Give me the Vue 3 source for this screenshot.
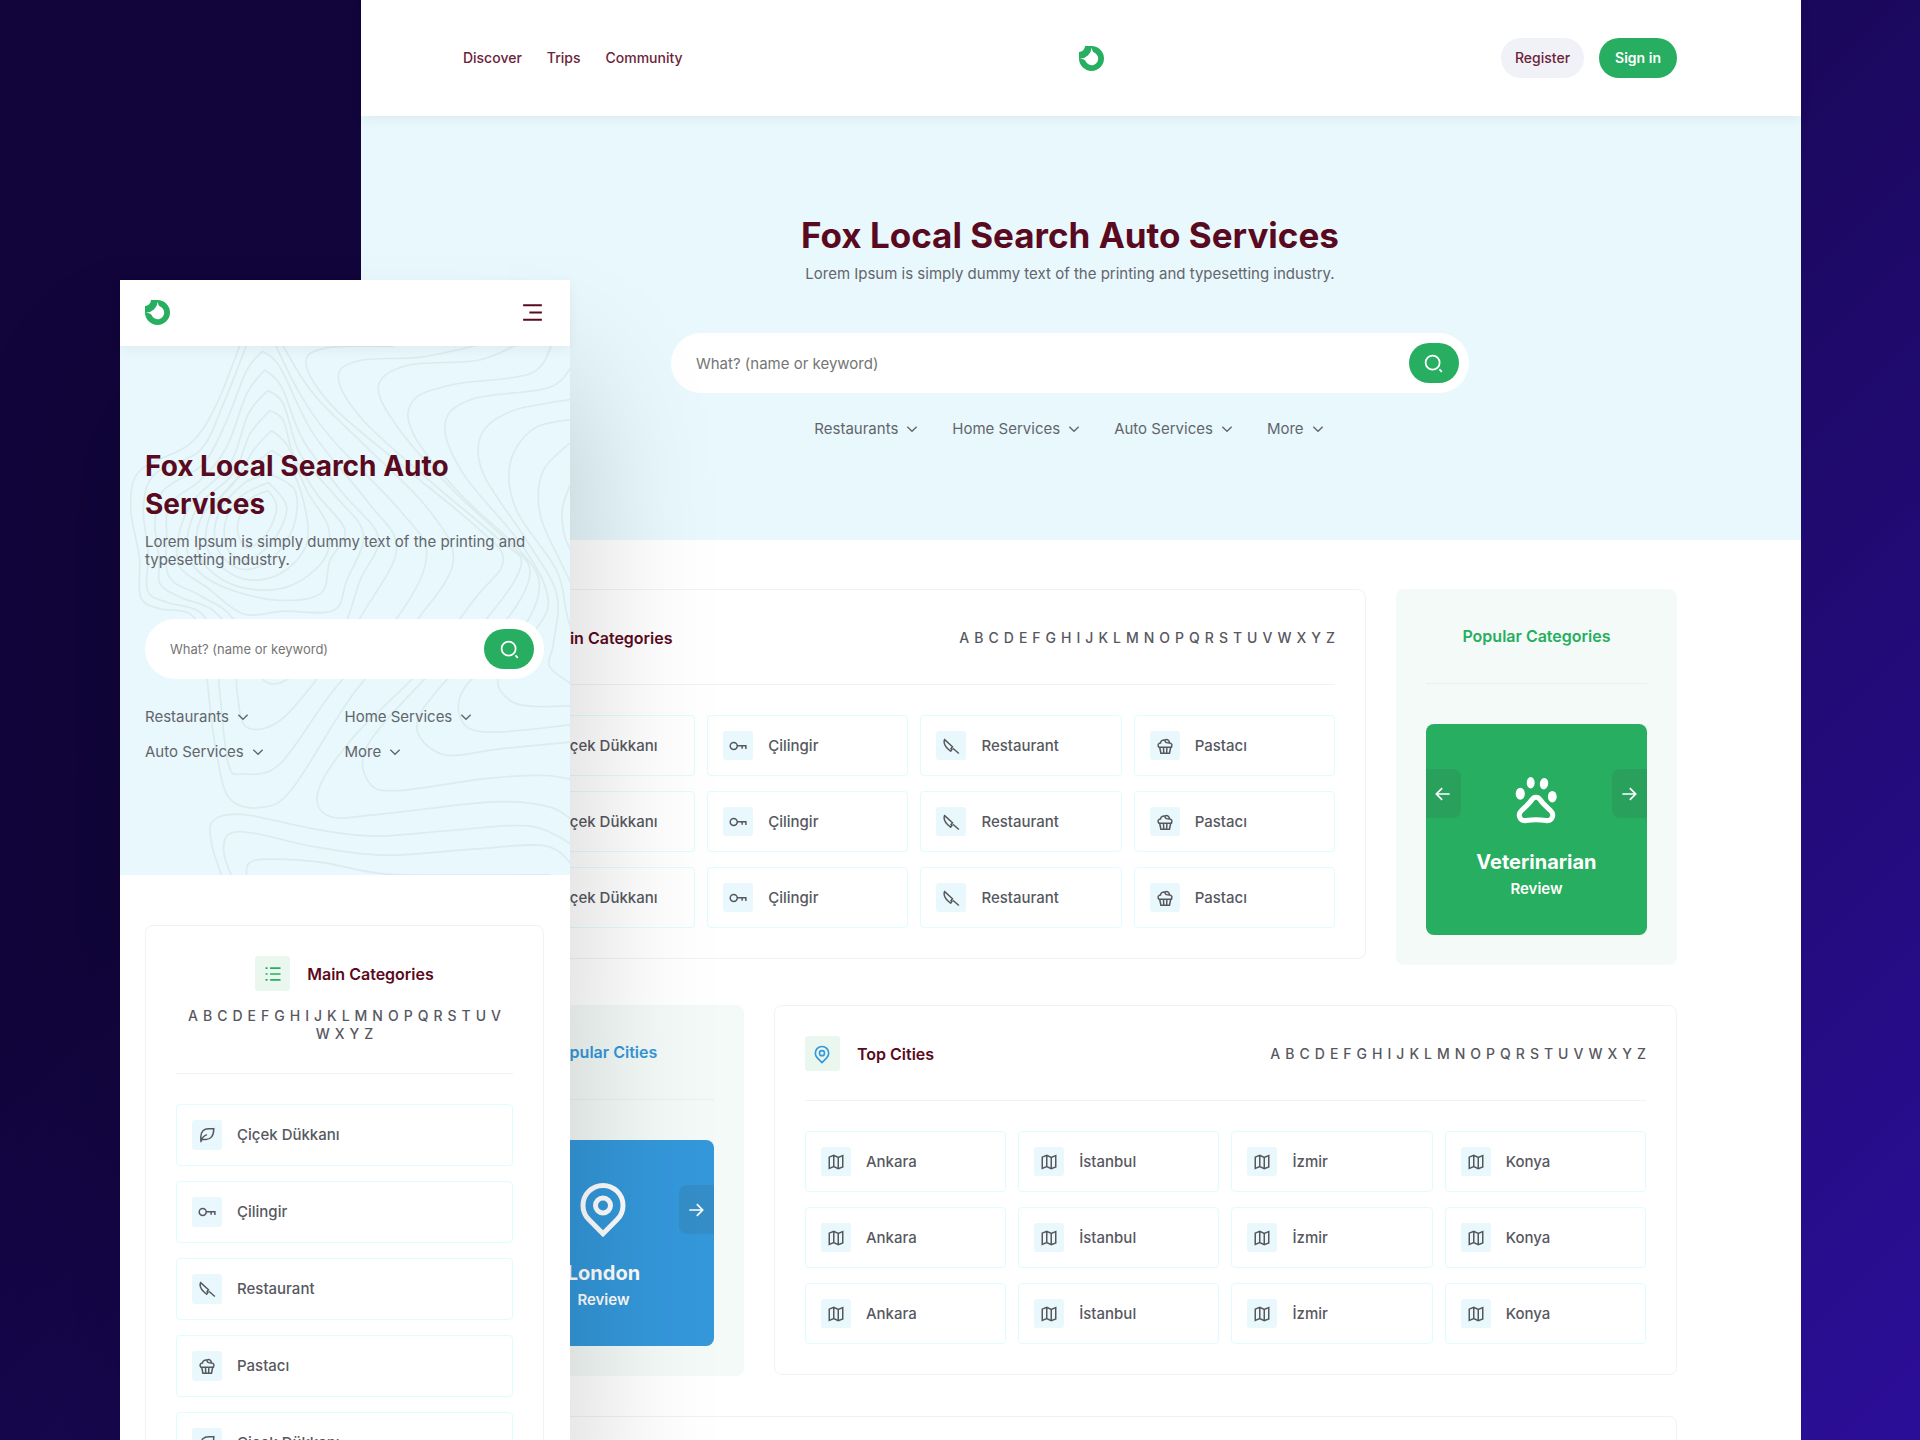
<script setup>
import { ref } from 'vue'

const alphabet = 'ABCDEFGHIJKLMNOPQRSTUVWXYZ'.split('')
const navLinks = ['Discover', 'Trips', 'Community']
const filters = ['Restaurants', 'Home Services', 'Auto Services', 'More']

const categories = [
  { label: 'Çiçek Dükkanı', icon: 'leaf' },
  { label: 'Çilingir', icon: 'key' },
  { label: 'Restaurant', icon: 'knife' },
  { label: 'Pastacı', icon: 'cake' }
]
const cities = ['Ankara', 'İstanbul', 'İzmir', 'Konya'].map((label) => ({ label, icon: 'map' }))

// three identical rows in the wide lists, a longer single column on the phone
const categoryRows = [...categories, ...categories, ...categories]
const cityRows = [...cities, ...cities, ...cities]

const keyword = ref('')

// 24x24 stroke icons
const icons = {
  leaf: 'M4 21.500c0-2-.3-3.500-.3-6.500C3.700 7.500 8 3.500 14 3.500c2.500 0 4.500.5 7 0 .3 10-4.500 14.500-10.500 14.500H5M4.500 20c.5-4.500 3-7 7.500-8.500',
  key: 'M11 12a4.700 4.700 0 1 1-9.400 0 4.700 4.700 0 0 1 9.400 0zM11 11.500H22.500v4.500M17.500 11.500v4',
  knife: 'M3.500 3.500l10.500 9.500-2 2.500 1.200 1.200L11.500 19C5 14 1 9 3.500 3.500zM14.500 15l8 7',
  cake: 'M5 14l1.500 7.500h11.500l1.500-7.500M3 13.500h18.500M10 14l.3 7M14.500 14l-.3 7M4 13.500c-2.500-2-1-5.500 2-5.500 0-3 3-4.500 6-4 3-1.500 6 .5 6 4 3 0 4.500 3.500 2 5.500M12 4c-.5 3 2 4 6 4',
  map: 'M3 5.500L9 3l6 3 6-2.500v15L15 21l-6-3-6 2.500zM9 3v15M15 6v15',
  pin: 'M12 22.300l-5.660-5.660a8 8 0 1 1 11.320 0zM12 8a3 3 0 1 0 0 6 3 3 0 0 0 0-6z',
  list: 'M8.500 5H21M8.500 12H21M8.500 19H21M3 5h2.500M3 12h2.500M3 19h2.500',
  chevron: 'M5 8.500l7 7 7-7',
  left: 'M20 12H4M11 5l-7 7 7 7',
  right: 'M4 12h16M13 5l7 7-7 7',
  search: 'M19 11a8 8 0 1 1-16 0 8 8 0 0 1 16 0zM18.800 18.800l2.700 2.700'
}

const logo = 'M6 0H12.500A12.500 12.500 0 1 1 0 12.500V6A6 6 0 0 0 6 0ZM12.800 1.500C13 4 13.500 5.500 15 6.600A6.500 6.500 0 1 1 6.600 15C5.500 13.500 3 13 .8 12.800A12.600 12.600 0 0 0 12.800 1.500Z'

// contour lines of the phone hero, as points of smooth curves
const contours = [
  [[425, 240], [350, 430], [270, 550], [120, 630], [92, 740], [118, 890], [122, 1010], [180, 1045], [270, 1060], [320, 1150], [322, 1260], [350, 1480], [390, 1615], [490, 1640], [580, 1580], [760, 1300], [950, 1080], [1060, 900], [980, 740], [800, 560], [640, 400], [540, 240]],
  [[445, 240], [370, 430], [300, 570], [165, 640], [130, 740], [145, 880], [142, 990], [200, 1025], [300, 1055], [350, 1150], [358, 1280], [385, 1510], [430, 1540], [540, 1510], [700, 1290], [900, 1060], [980, 880], [900, 750], [700, 540], [600, 400], [520, 240]],
  [[487, 272], [440, 330], [380, 480], [310, 610], [190, 690], [165, 790], [178, 900], [180, 970], [240, 1010], [340, 1050], [400, 1140], [412, 1300], [440, 1400], [540, 1380], [670, 1230], [800, 1040], [890, 860], [800, 720], [640, 520], [540, 320], [487, 272]],
  [[495, 328], [440, 400], [380, 560], [300, 660], [210, 730], [200, 830], [208, 950], [300, 1005], [400, 1075], [490, 1258], [590, 1240], [720, 1120], [780, 960], [835, 830], [730, 700], [610, 540], [545, 380], [495, 328]],
  [[503, 390], [445, 460], [390, 610], [280, 720], [235, 830], [240, 920], [320, 980], [430, 1060], [550, 1052], [700, 1050], [740, 960], [790, 820], [700, 700], [600, 580], [550, 430], [503, 390]],
  [[510, 450], [450, 520], [400, 640], [300, 730], [262, 830], [275, 910], [360, 975], [520, 1018], [660, 1000], [690, 900], [735, 810], [650, 700], [580, 580], [550, 480], [510, 450]],
  [[515, 510], [460, 570], [400, 670], [310, 760], [290, 850], [320, 920], [420, 980], [560, 980], [670, 900], [685, 800], [620, 690], [565, 560], [515, 510]],
  [[515, 570], [450, 620], [370, 700], [320, 800], [335, 890], [430, 955], [540, 940], [620, 850], [610, 720], [565, 610], [515, 570]],
  [[510, 640], [430, 670], [355, 760], [350, 860], [420, 925], [510, 900], [580, 800], [585, 690], [510, 640]],
  [[505, 665], [420, 710], [375, 790], [385, 870], [440, 900], [520, 840], [560, 740], [505, 665]],
  [[505, 690], [445, 720], [412, 800], [440, 862], [500, 820], [530, 740], [505, 690]],
  [[880, 258], [680, 262], [618, 310], [700, 440], [900, 610], [1130, 800], [1210, 900], [1120, 1020], [960, 1230], [760, 1430], [655, 1590], [690, 1668], [850, 1660], [1180, 1624], [1350, 1640], [1430, 1690]],
  [[1130, 255], [960, 290], [780, 300], [715, 350], [790, 480], [1000, 670], [1200, 840], [1262, 920], [1130, 1110], [960, 1270], [800, 1460], [810, 1570], [900, 1590], [1150, 1555], [1330, 1545], [1430, 1560]],
  [[1245, 255], [1130, 300], [920, 315], [835, 380], [900, 510], [1060, 690], [1230, 850], [1290, 940], [1210, 1090], [1020, 1280], [950, 1400], [1030, 1482], [1200, 1465], [1430, 1443]],
  [[1355, 255], [1290, 340], [1060, 372], [940, 420], [940, 520], [1080, 700], [1260, 870], [1318, 980], [1250, 1130], [1095, 1280], [1085, 1380], [1170, 1415], [1430, 1391]],
  [[1425, 300], [1350, 380], [1120, 415], [1035, 490], [1090, 640], [1270, 860], [1345, 1020], [1290, 1130], [1195, 1250], [1230, 1320], [1310, 1338], [1430, 1335]],
  [[1425, 415], [1240, 450], [1145, 520], [1150, 640], [1280, 840], [1370, 1000], [1360, 1150], [1350, 1220], [1430, 1280]],
  [[1425, 475], [1300, 505], [1230, 610], [1250, 750], [1370, 930], [1400, 1060], [1430, 1160]],
  [[1425, 535], [1330, 630], [1320, 760], [1380, 900], [1430, 1000]],
  [[1425, 640], [1388, 740], [1395, 830], [1430, 900]],
  [[370, 1860], [335, 1750], [340, 1680], [430, 1662], [640, 1705], [820, 1727], [1050, 1710], [1290, 1697], [1430, 1760]],
  [[400, 1860], [372, 1780], [385, 1722], [460, 1718], [650, 1760], [860, 1784], [1130, 1765], [1340, 1757], [1430, 1830]],
  [[440, 1860], [445, 1810], [500, 1796], [660, 1805], [850, 1840], [1100, 1844], [1350, 1843]]
].map(smoothPath)

function smoothPath(pts) {
  let d = `M${pts[0]}`
  for (let i = 0; i < pts.length - 1; i++) {
    const [p0, p1, p2, p3] = [pts[i - 1] || pts[i], pts[i], pts[i + 1], pts[i + 2] || pts[i + 1]]
    const c1 = [p1[0] + (p2[0] - p0[0]) / 6, p1[1] + (p2[1] - p0[1]) / 6]
    const c2 = [p2[0] - (p3[0] - p1[0]) / 6, p2[1] - (p3[1] - p1[1]) / 6]
    d += `C${c1} ${c2} ${p2}`
  }
  return d
}
</script>

<template>
  <main class="stage">
    <!-- Desktop -->
    <div class="desktop">
      <header class="topbar">
        <nav class="nav">
          <a v-for="link in navLinks" :key="link" href="#">{{ link }}</a>
        </nav>
        <a href="#" class="logo" aria-label="Home">
          <svg viewBox="0 0 25 25"><path :d="logo" fill-rule="evenodd" /></svg>
        </a>
        <div class="actions">
          <button type="button" class="pill">Register</button>
          <button type="button" class="pill primary">Sign in</button>
        </div>
      </header>

      <section class="hero">
        <h1>Fox Local Search Auto Services</h1>
        <p>Lorem Ipsum is simply dummy text of the printing and typesetting industry.</p>
        <form class="search" @submit.prevent>
          <input v-model="keyword" type="text" placeholder="What? (name or keyword)" aria-label="What? (name or keyword)" />
          <button type="submit" aria-label="Search">
            <svg class="icon" viewBox="0 0 24 24"><path :d="icons.search" /></svg>
          </button>
        </form>
        <div class="filters">
          <a v-for="filter in filters" :key="filter" href="#">
            {{ filter }}
            <svg class="icon chevron" viewBox="0 0 24 24"><path :d="icons.chevron" /></svg>
          </a>
        </div>
      </section>

      <div class="content">
        <div class="row">
          <section class="card">
            <div class="card-head">
              <h2>
                <span class="badge green"><svg class="icon" viewBox="0 0 24 24"><path :d="icons.list" /></svg></span>
                Main Categories
              </h2>
              <div class="letters">
                <a v-for="letter in alphabet" :key="letter" href="#">{{ letter }}</a>
              </div>
            </div>
            <div class="items">
              <a v-for="(item, i) in categoryRows" :key="i" href="#" class="item">
                <span class="tile"><svg class="icon" viewBox="0 0 24 24"><path :d="icons[item.icon]" /></svg></span>
                {{ item.label }}
              </a>
            </div>
          </section>

          <aside class="popular">
            <h2>Popular Categories</h2>
            <div class="slide">
              <button type="button" class="arrow prev" aria-label="Previous"><svg class="icon" viewBox="0 0 24 24"><path :d="icons.left" /></svg></button>
              <svg class="paw" viewBox="0 0 60 65">
                <ellipse cx="24.700" cy="20.700" rx="4" ry="5.700" />
                <ellipse cx="38" cy="21.700" rx="4.200" ry="5.700" transform="rotate(8 38 21.700)" />
                <ellipse cx="14.300" cy="31.700" rx="4.600" ry="6" />
                <ellipse cx="46.300" cy="34.700" rx="4.400" ry="5.800" />
                <path d="M26 37.500C28 34.500 32 34.500 34 37.500C37 42 41 45 44.500 48.500C49 53 46 59.500 40 58.500C33 57.500 27 57.500 20 58.500C14 59.500 11 53 15.500 48.500C19 45 23 42 26 37.500Z" />
              </svg>
              <h3>Veterinarian</h3>
              <p>Review</p>
              <button type="button" class="arrow next" aria-label="Next"><svg class="icon" viewBox="0 0 24 24"><path :d="icons.right" /></svg></button>
            </div>
          </aside>
        </div>

        <div class="row reverse">
          <aside class="popular blue">
            <h2>Popular Cities</h2>
            <div class="slide">
              <button type="button" class="arrow prev" aria-label="Previous"><svg class="icon" viewBox="0 0 24 24"><path :d="icons.left" /></svg></button>
              <svg class="icon big-pin" viewBox="0 0 24 24"><path :d="icons.pin" /></svg>
              <h3>London</h3>
              <p>Review</p>
              <button type="button" class="arrow next" aria-label="Next"><svg class="icon" viewBox="0 0 24 24"><path :d="icons.right" /></svg></button>
            </div>
          </aside>

          <section class="card">
            <div class="card-head">
              <h2>
                <span class="badge blue"><svg class="icon" viewBox="0 0 24 24"><path :d="icons.pin" /></svg></span>
                Top Cities
              </h2>
              <div class="letters">
                <a v-for="letter in alphabet" :key="letter" href="#">{{ letter }}</a>
              </div>
            </div>
            <div class="items">
              <a v-for="(item, i) in cityRows" :key="i" href="#" class="item">
                <span class="tile"><svg class="icon" viewBox="0 0 24 24"><path :d="icons[item.icon]" /></svg></span>
                {{ item.label }}
              </a>
            </div>
          </section>
        </div>

        <section class="card next-card"></section>
      </div>
    </div>

    <!-- Phone -->
    <div class="phone">
      <header class="topbar">
        <a href="#" class="logo" aria-label="Home">
          <svg viewBox="0 0 25 25"><path :d="logo" fill-rule="evenodd" /></svg>
        </a>
        <button type="button" class="burger" aria-label="Menu">
          <svg viewBox="0 0 24 24"><path d="M3 5h18M9 12h12M3 19h18" /></svg>
        </button>
      </header>

      <section class="hero">
        <svg class="contours" viewBox="60 255 1350 1590" preserveAspectRatio="xMidYMid slice" aria-hidden="true">
          <path v-for="(d, i) in contours" :key="i" :d="d" />
        </svg>
        <h1>Fox Local Search Auto Services</h1>
        <p>Lorem Ipsum is simply dummy text of the printing and typesetting industry.</p>
        <form class="search" @submit.prevent>
          <input v-model="keyword" type="text" placeholder="What? (name or keyword)" aria-label="What? (name or keyword)" />
          <button type="submit" aria-label="Search">
            <svg class="icon" viewBox="0 0 24 24"><path :d="icons.search" /></svg>
          </button>
        </form>
        <div class="filters">
          <a v-for="filter in filters" :key="filter" href="#">
            {{ filter }}
            <svg class="icon chevron" viewBox="0 0 24 24"><path :d="icons.chevron" /></svg>
          </a>
        </div>
      </section>

      <div class="content">
        <section class="card">
          <div class="card-head">
            <h2>
              <span class="badge green"><svg class="icon" viewBox="0 0 24 24"><path :d="icons.list" /></svg></span>
              Main Categories
            </h2>
            <div class="letters">
              <a v-for="letter in alphabet" :key="letter" href="#">{{ letter }}</a>
            </div>
          </div>
          <div class="items">
            <a v-for="(item, i) in categoryRows" :key="i" href="#" class="item">
              <span class="tile"><svg class="icon" viewBox="0 0 24 24"><path :d="icons[item.icon]" /></svg></span>
              {{ item.label }}
            </a>
          </div>
        </section>
      </div>
    </div>
  </main>
</template>

<style>
body {
  margin: 0;
}
</style>

<style scoped>
.stage {
  position: relative;
  height: 100vh;
  overflow: hidden;
  background: linear-gradient(135deg, #11053b 30%, #2b0e98 100%);
  font-family: Inter, sans-serif;
  font-size: 15px;
  line-height: 18px;
  color: #57585f;
}

.stage * {
  box-sizing: border-box;
}

h1, h2, h3, p {
  margin: 0;
}

h1, h2 {
  color: #5a0a20;
}

a {
  color: inherit;
  text-decoration: none;
}

button {
  border: 0;
  padding: 0;
  font: inherit;
  cursor: pointer;
}

.icon {
  display: block;
  width: 18px;
  height: 18px;
  fill: none;
  stroke: currentColor;
  stroke-width: 2;
}

/* Windows */
.desktop {
  min-height: 100vh;
  margin: 0 6.2% 0 18.8%;
  background-color: #fff;
}

.phone {
  position: absolute;
  top: 280px;
  left: 6.25%;
  width: 450px;
  min-height: 100%;
  background-color: #fff;
  box-shadow: 0 100px 150px rgba(0, 0, 0, 0.2);
}

/* Top bar */
.topbar {
  position: relative;
  z-index: 1;
  display: flex;
  align-items: center;
  justify-content: space-between;
  background-color: #fff;
  box-shadow: 0 4px 12px rgba(0, 0, 0, 0.05);
}

.desktop .topbar {
  padding: 38px 124px 38px 102px;
}

.phone .topbar {
  padding: 20px 25px 21px;
}

.nav {
  display: flex;
  gap: 25px;
  font-size: 14px;
  font-weight: 500;
  color: #6b2338;
}

.logo svg {
  display: block;
  width: 25px;
  height: 25px;
  fill: #27ae60;
}

.actions {
  display: flex;
  gap: 15px;
}

.pill {
  height: 40px;
  padding: 0 14px;
  border-radius: 20px;
  background-color: #f1f2f8;
  font-size: 14px;
  font-weight: 500;
  color: #6b2338;
}

.pill.primary {
  padding: 0 16px;
  background-color: #27ae60;
  font-weight: 600;
  color: #fff;
}

.burger {
  background: none;
}

.burger svg {
  display: block;
  width: 25px;
  height: 25px;
  fill: none;
  stroke: #5a0a20;
  stroke-width: 2;
}

/* Hero */
.hero {
  position: relative;
  background-color: #e8f8fc;
  color: #63656c;
}

.desktop .hero {
  display: flex;
  flex-direction: column;
  align-items: center;
  padding: 97px 124px 102px 102px;
}

.phone .hero {
  padding: 101px 26px 114px 25px;
  overflow: hidden;
}

.contours {
  position: absolute;
  inset: 0;
  width: 100%;
  height: 100%;
  fill: none;
  stroke: #dcebed;
  stroke-width: 5;
}

.phone .hero > :not(.contours) {
  position: relative;
}

.hero h1 {
  font-size: 35px;
  line-height: 44px;
  font-weight: 700;
}

.hero p {
  margin-top: 8px;
}

.phone .hero h1 {
  font-size: 28px;
  line-height: 38px;
}

.phone .hero p {
  margin-top: 10px;
}

.search {
  display: flex;
  align-items: center;
  width: 100%;
  max-width: 798px;
  height: 60px;
  margin-top: 50px;
  padding: 0 10px 0 25px;
  border-radius: 30px;
  background-color: #fff;
}

.search input {
  flex: 1;
  min-width: 0;
  border: 0;
  padding: 0;
  outline: none;
  background: none;
  font-family: inherit;
  font-size: 15px;
  color: #57585f;
}

.phone .search input {
  font-size: 13px;
}

.search input::placeholder {
  color: #757575;
}

.search button {
  display: flex;
  align-items: center;
  justify-content: center;
  width: 50px;
  height: 40px;
  border-radius: 20px;
  background-color: #27ae60;
  color: #fff;
}

.search .icon {
  width: 21px;
  height: 21px;
}

.filters {
  display: flex;
  gap: 32px;
  margin-top: 27px;
}

.filters a {
  display: flex;
  align-items: center;
  gap: 6px;
}

.chevron {
  width: 16px;
  height: 16px;
}

.phone .filters {
  display: grid;
  grid-template-columns: 1fr 1fr;
  gap: 17px 0;
  margin-top: 29px;
}

/* Content */
.desktop .content {
  display: flex;
  flex-direction: column;
  gap: 40px;
  padding: 49px 124px 40px 102px;
}

.phone .content {
  padding: 50px 26px 50px 25px;
}

.row {
  display: grid;
  grid-template-columns: minmax(0, 1fr) 281px;
  align-items: start;
  gap: 30px;
}

.row.reverse {
  grid-template-columns: 281px minmax(0, 1fr);
}

.card {
  padding: 30px;
  border: 1px solid #f1f2f8;
  border-radius: 8px;
  background-color: #fff;
}

.next-card {
  min-height: 370px;
}

.card-head {
  display: flex;
  align-items: center;
  justify-content: space-between;
  padding-bottom: 29px;
  border-bottom: 1px solid #f1f2f8;
}

.card-head h2 {
  display: flex;
  align-items: center;
  gap: 17px;
  font-size: 16px;
  font-weight: 600;
}

.badge {
  display: flex;
  align-items: center;
  justify-content: center;
  width: 35px;
  height: 35px;
  border-radius: 3px;
  background-color: #e9f7ef;
}

.badge .icon {
  width: 20px;
  height: 20px;
}

.badge.green {
  color: #27ae60;
}

.badge.blue {
  color: #3498db;
}

.letters {
  display: flex;
  flex-wrap: wrap;
  gap: 0 5px;
  font-size: 14px;
  font-weight: 500;
}

.items {
  display: grid;
  grid-template-columns: repeat(4, minmax(0, 1fr));
  gap: 15px 12px;
  margin-top: 30px;
}

.item {
  display: flex;
  align-items: center;
  gap: 15px;
  padding: 15px;
  border: 1px solid #dffcfe;
  border-radius: 4px;
  font-weight: 500;
}

.tile {
  display: flex;
  align-items: center;
  justify-content: center;
  width: 30px;
  height: 29px;
  border-radius: 3px;
  background-color: #e8f8fc;
}

.phone .card-head {
  flex-direction: column;
  gap: 16px;
  padding-bottom: 30px;
}

.phone .letters {
  justify-content: center;
  padding: 0 8px;
}

.phone .items {
  grid-template-columns: 1fr;
}

.phone .tile {
  height: 30px;
}

/* Popular */
.popular {
  padding: 30px;
  border-radius: 8px;
  background-color: #f4faf7;
}

.popular h2 {
  padding-bottom: 29px;
  border-bottom: 1px solid #e9f1ee;
  font-size: 16px;
  line-height: 35px;
  font-weight: 600;
  text-align: center;
  color: #27ae60;
}

.popular.blue h2 {
  color: #3498db;
}

.slide {
  position: relative;
  display: flex;
  flex-direction: column;
  align-items: center;
  margin-top: 40px;
  padding: 38px 0 36px;
  border-radius: 8px;
  background-color: #27ae60;
  color: #fff;
}

.popular.blue .slide {
  background-color: #3498db;
}

.paw {
  width: 60px;
  height: 65px;
  fill: #fff;
}

.paw path {
  fill: none;
  stroke: #fff;
  stroke-width: 5;
}

.big-pin {
  width: 60px;
  height: 60px;
}

.slide h3 {
  margin-top: 23px;
  font-size: 20px;
  line-height: 24px;
  font-weight: 700;
}

.slide p {
  margin-top: 5px;
  line-height: 20px;
  font-weight: 600;
}

.arrow {
  position: absolute;
  top: 45px;
  display: flex;
  align-items: center;
  justify-content: center;
  width: 35px;
  height: 49px;
  background-color: rgba(65, 75, 75, 0.13);
  color: #fff;
}

.arrow .icon {
  width: 20px;
  height: 20px;
}

.prev {
  left: 0;
  border-radius: 0 8px 8px 0;
}

.next {
  right: 0;
  border-radius: 8px 0 0 8px;
}
</style>
